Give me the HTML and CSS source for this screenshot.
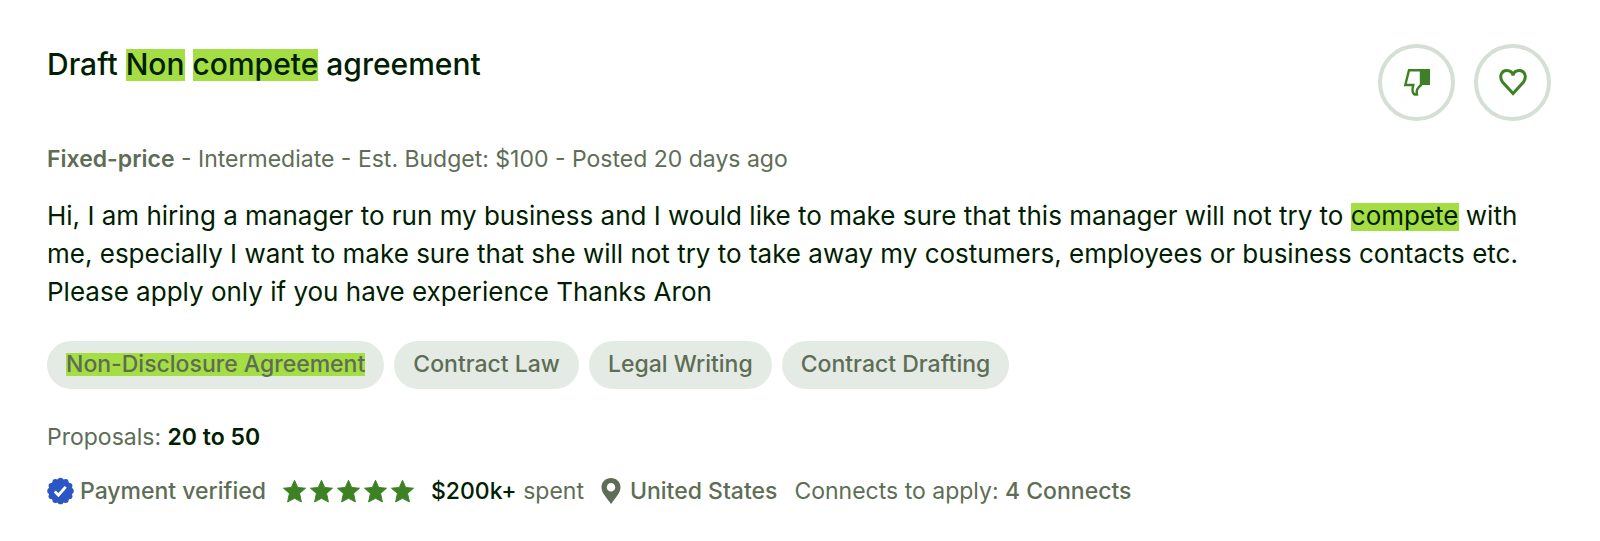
FILE: index.html
```html
<!DOCTYPE html>
<html lang="en">
<head>
    <meta charset="UTF-8">
    <meta name="viewport" content="width=device-width, initial-scale=1.0">
    <title>Draft Non compete agreement</title>
    <link rel="stylesheet" href="styles.css">
</head>
<body>
    <svg class="sprite" aria-hidden="true">
        <symbol id="star" viewBox="0 0 24 24">
            <path d="M12 .8l3.300 7.500 8.200.8-6.200 5.400 1.900 8.900-7.200-3.800-7.200 3.800 1.900-8.900L.5 9.100l8.200-.8z" stroke-width="1" stroke-linejoin="round"/>
        </symbol>
    </svg>
    <article class="job">
        <header class="job-header">
            <h2 class="job-title">Draft <mark>Non</mark> <mark>compete</mark> agreement</h2>
            <div class="job-actions">
                <button type="button" class="round-btn" aria-label="Not interested">
                    <svg viewBox="0 0 28 28" width="28" height="28">
                        <path d="M6 2.200h12V17c-3.500 3-5 5-4 9.500-4 .8-5.500-3-3.700-9.500H2.300z" fill="none" stroke="currentColor" stroke-width="2.400"/>
                        <path d="M18 1h9v16h-9z" fill="currentColor"/>
                    </svg>
                </button>
                <button type="button" class="round-btn" aria-label="Save job">
                    <svg viewBox="0 0 28 28" width="28" height="28">
                        <path d="M14 25.500L3.500 14C-.5 8 3 2.500 7.500 2.500c3.500 0 6 2 6.500 5 .5-3 3-5 6.500-5C25 2.500 28.500 8 24.500 14z" fill="none" stroke="currentColor" stroke-width="3"/>
                    </svg>
                </button>
            </div>
        </header>
        <p class="job-meta"><strong>Fixed-price</strong> - Intermediate - Est. Budget: $100 - Posted 20 days ago</p>
        <p class="job-text">Hi, I am hiring a manager to run my business and I would like to make sure that this manager will not try to <mark>compete</mark> with me, especially I want to make sure that she will not try to take away my costumers, employees or business contacts etc. Please apply only if you have experience Thanks Aron</p>
        <div class="tags">
            <a href="#" class="tag"><mark>Non-Disclosure Agreement</mark></a>
            <a href="#" class="tag">Contract Law</a>
            <a href="#" class="tag">Legal Writing</a>
            <a href="#" class="tag">Contract Drafting</a>
        </div>
        <p class="proposals">Proposals: <strong class="dark">20 to 50</strong></p>
        <div class="client">
            <span class="client-item verified">
                <svg viewBox="0 0 26 26" width="27" height="28">
                    <g fill="#2b56c4">
                        <circle cx="13" cy="13" r="11.500"/>
                        <circle cx="13" cy="3" r="2.800"/>
                        <circle cx="18" cy="4.300" r="2.800"/>
                        <circle cx="21.700" cy="8" r="2.800"/>
                        <circle cx="23" cy="13" r="2.800"/>
                        <circle cx="21.700" cy="18" r="2.800"/>
                        <circle cx="18" cy="21.700" r="2.800"/>
                        <circle cx="13" cy="23" r="2.800"/>
                        <circle cx="8" cy="21.700" r="2.800"/>
                        <circle cx="4.300" cy="18" r="2.800"/>
                        <circle cx="3" cy="13" r="2.800"/>
                        <circle cx="4.300" cy="8" r="2.800"/>
                        <circle cx="8" cy="4.300" r="2.800"/>
                    </g>
                    <path d="M7.500 13.500l3.500 3.500 7-8" fill="none" stroke="#fff" stroke-width="2.800"/>
                </svg>
                <strong>Payment verified</strong>
            </span>
            <span class="client-item stars" role="img" aria-label="5 stars">
                <svg width="23" height="24"><use href="#star"/></svg>
                <svg width="23" height="24"><use href="#star"/></svg>
                <svg width="23" height="24"><use href="#star"/></svg>
                <svg width="23" height="24"><use href="#star"/></svg>
                <svg width="23" height="24"><use href="#star"/></svg>
            </span>
            <span class="client-item"><span><strong class="dark">$200k+</strong> spent</span></span>
            <span class="client-item location">
                <svg viewBox="0 0 20 26" width="20" height="28">
                    <path d="M10 0C4.500 0 .5 4 .5 9.300.5 15 5 19 10 26c5-7 9.500-11 9.500-16.700C19.500 4 15.500 0 10 0zm0 5a4 4 0 1 1 0 8.500A4 4 0 0 1 10 5z" fill="currentColor"/>
                </svg>
                <strong>United States</strong>
            </span>
            <span class="client-item"><span>Connects to apply: <strong>4 Connects</strong></span></span>
        </div>
    </article>
</body>
</html>
```
FILE: styles.css
```css
* {
    box-sizing: border-box;
}
body {
    margin: 0;
    background: #fff;
    color: #001e00;
    font-family: Inter, "Liberation Sans", sans-serif;
}
h2, p {
    margin: 0;
}
strong {
    font-weight: 600;
}
mark {
    display: inline-block;
    line-height: 1;
    padding-bottom: 2px;
    background: #a5de44;
    color: inherit;
}
.sprite {
    display: none;
}
.job {
    padding: 44px 49px 44px 47px;
    font-size: 23px;
    line-height: 32px;
    color: #5e6d55;
}
.job-header {
    display: flex;
    justify-content: space-between;
    align-items: flex-start;
}
.job-title {
    color: #001e00;
    font-size: 30px;
    line-height: 40px;
    font-weight: 500;
}
.job-actions {
    display: flex;
    gap: 19px;
}
.round-btn {
    display: flex;
    align-items: center;
    justify-content: center;
    width: 77px;
    height: 77px;
    padding: 0 0 2px;
    border: 4px solid #d5e0d5;
    border-radius: 50%;
    background: #fff;
    color: #3c8224;
    cursor: pointer;
}
.job-meta {
    margin-top: 22px;
}
.job-text {
    margin-top: 22px;
    color: #001e00;
    font-size: 26px;
    line-height: 38px;
}
.tags {
    display: flex;
    flex-wrap: wrap;
    gap: 10px;
    margin-top: 30px;
}
.tag {
    padding: 7px 19px 9px;
    border-radius: 24px;
    background: #e4ebe4;
    color: #5e6d55;
    font-weight: 500;
    text-decoration: none;
}
.tag mark {
    padding-bottom: 0;
}
.proposals {
    margin-top: 32px;
}
.dark {
    color: #001e00;
}
.client {
    display: flex;
    flex-wrap: wrap;
    gap: 17px;
    margin-top: 22px;
}
.client strong {
    font-weight: 500;
}
.client-item {
    display: flex;
    align-items: center;
}
.verified {
    gap: 6px;
}
.stars {
    gap: 4px;
    fill: #3c8224;
    stroke: #3c8224;
}
.stars svg {
    overflow: visible;
}
.location {
    gap: 9px;
}
```
